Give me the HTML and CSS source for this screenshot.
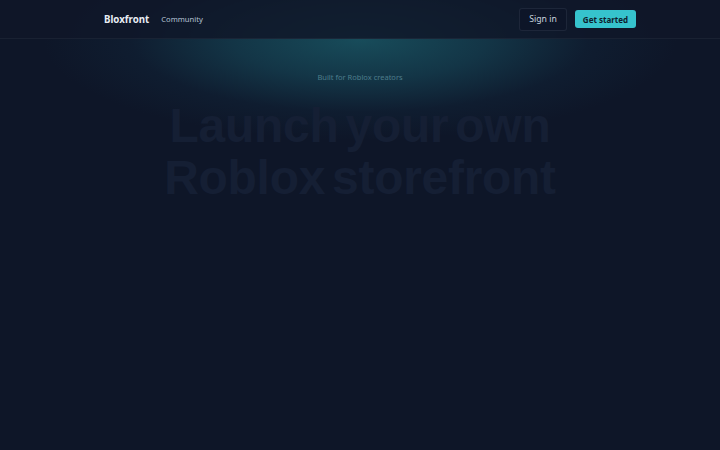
FILE: index.html
```html
<!DOCTYPE html>
<html lang="en">
<head>
<meta charset="utf-8">
<title>Bloxfront</title>
<link rel="stylesheet" href="styles.css">
</head>
<body>
<div class="page">
  <div class="glow"></div>
  <header class="nav">
    <div class="nav-inner">
      <div class="nav-left">
        <span class="brand">Bloxfront</span>
        <a class="nav-link">Community</a>
      </div>
      <div class="nav-right">
        <a class="btn-ghost">Sign in</a>
        <a class="btn-primary">Get started</a>
      </div>
    </div>
  </header>
  <main class="hero">
    <p class="eyebrow">Built for Roblox creators</p>
    <h1 class="title">Launch your own<br>Roblox storefront</h1>
  </main>
</div>
</body>
</html>
```
FILE: styles.css
```css
* { box-sizing: border-box; }
html, body { margin: 0; padding: 0; }
body {
  background: #0e1628;
  font-family: "Noto Sans", "DejaVu Sans", sans-serif;
  color: #e2e8f0;
  width: 720px;
  height: 450px;
  overflow: hidden;
}
.page { position: relative; min-height: 450px; overflow: hidden; }
.glow {
  position: absolute;
  left: 50%;
  top: -40px;
  width: 720px;
  height: 200px;
  transform: translateX(-50%);
  background: radial-gradient(ellipse 44% 50% at 50% 40%, rgba(30, 112, 124, 0.6) 0%, rgba(26, 96, 112, 0.42) 40%, rgba(20, 60, 84, 0.18) 72%, rgba(14, 22, 40, 0) 100%);
  pointer-events: none;
}
.nav {
  height: 39px;
  border-bottom: 1px solid rgba(148, 163, 184, 0.08);
  background: rgba(15, 23, 41, 0.84);
  position: relative;
  z-index: 2;
}
.nav-inner {
  height: 38px;
  padding: 0 84px 0 104px;
  display: flex;
  align-items: center;
  justify-content: space-between;
}
.nav-left { display: flex; align-items: center; gap: 12px; }
.brand { font-weight: bold; font-size: 9.7px; color: #e8edf4; }
.nav-link { font-size: 7.6px; color: #b4c2d4; }
.nav-right { display: flex; align-items: center; gap: 8px; }
.btn-ghost {
  display: flex; align-items: center; justify-content: center;
  width: 48px; height: 23px;
  border: 1px solid rgba(148, 163, 184, 0.12);
  border-radius: 3px;
  font-size: 8.7px;
  color: #c7d2de;
  background: #0d1528;
}
.btn-primary {
  display: flex; align-items: center; justify-content: center;
  width: 61px; height: 18px;
  border-radius: 3px;
  background: #36c3cd;
  color: #0f1c2c;
  font-weight: bold;
  font-size: 8px;
}
.hero {
  position: relative;
  display: flex;
  flex-direction: column;
  align-items: center;
  padding-top: 33px;
}
.eyebrow {
  margin: 0;
  font-size: 7.5px;
  color: #4d7d8b;
  line-height: 10px;
}
.title {
  margin: 18px 0 0;
  font-family: "Liberation Sans", Arial, sans-serif;
  font-weight: 700;
  font-size: 48px;
  line-height: 52px;
  letter-spacing: -0.3px;
  word-spacing: -6px;
  text-align: center;
  color: #151f34;
}
```
